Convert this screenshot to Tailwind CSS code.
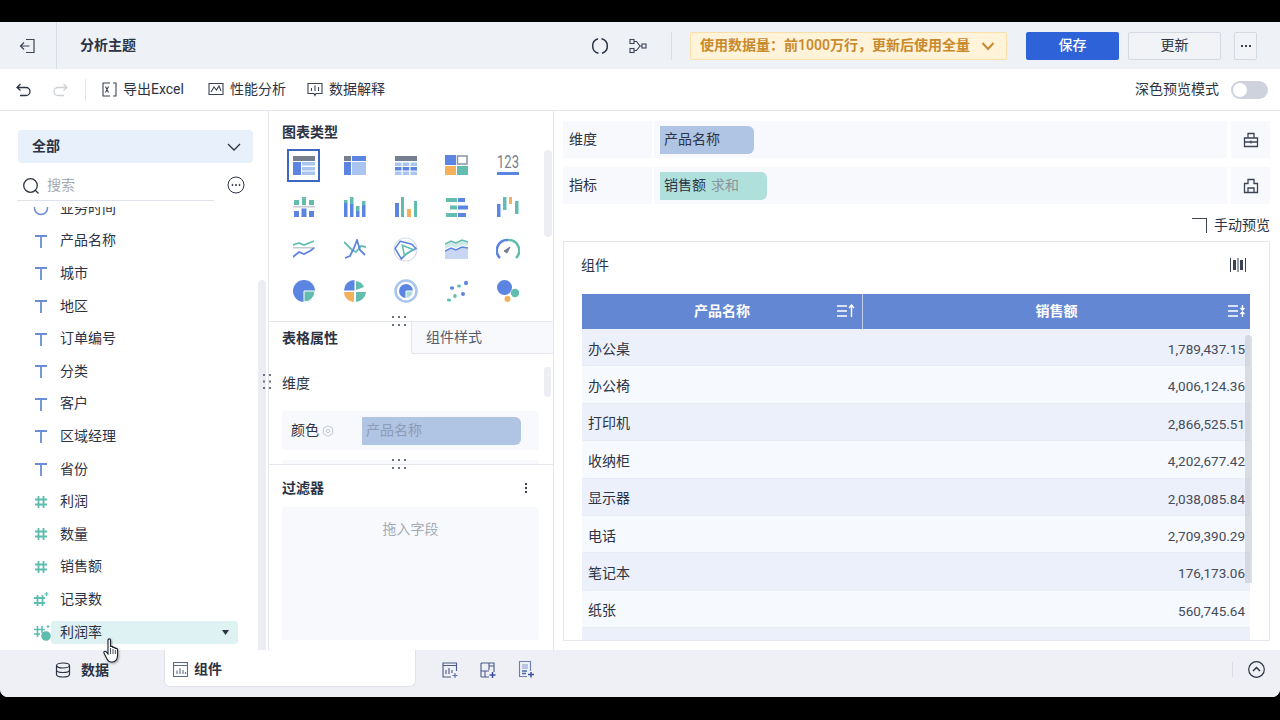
<!DOCTYPE html>
<html lang="zh">
<head>
<meta charset="utf-8">
<script src="https://cdn.jsdelivr.net/npm/@tailwindcss/browser@4"></script>
</head>
<body class="bg-black overflow-hidden">
<div class="w-[1280px] h-[720px] bg-black pt-[22px] font-['Roboto','Noto_Sans_CJK_SC',sans-serif] text-[14px] text-[#2c3344]">
<div class="relative h-[675px] rounded-b-lg overflow-hidden bg-white flex flex-col">

<!-- header -->
<header class="h-[47px] shrink-0 bg-[#eef1f6] flex items-center">
  <div class="w-[57px] h-full border-r border-[#d9dde5] flex items-center justify-center">
    <svg width="18" height="18" viewBox="0 0 18 18" fill="none" stroke="#3c4354" stroke-width="1.2"><path d="M7 2.500h8v13H7M1.500 9h9M5 5.500 1.500 9 5 12.500"/></svg>
  </div>
  <div class="ml-[23px] font-semibold">分析主题</div>
  <div class="ml-auto flex items-center">
    <svg width="18" height="18" viewBox="0 0 18 18" fill="none" stroke="#2c3344" stroke-width="1.500"><path d="M7 1.800A7.500 7.500 0 0 0 7.500 16.300M11 16.200A7.500 7.500 0 0 0 10.500 1.700"/></svg>
    <svg class="ml-[20px]" width="18" height="18" viewBox="0 0 18 18" fill="none" stroke="#3c4354" stroke-width="1.100"><rect x="1" y="2.500" width="4" height="4"/><rect x="1" y="11.500" width="4" height="4"/><rect x="13" y="7" width="4" height="4"/><path d="M5 4.500h2.500L11 9l-3.500 4.500H5M11 9h2"/></svg>
    <div class="ml-[24px] w-px h-[28px] bg-[#d9dde5]"></div>
    <div class="ml-[18px] w-[317px] h-[28px] bg-[#fff3d9] border border-[#fbdfa8] rounded-[2px] flex items-center pl-[9px] text-[#c98a2e] font-semibold whitespace-nowrap">使用数据量：前1000万行，更新后使用全量
      <svg class="ml-[11px]" width="14" height="10" viewBox="0 0 14 10" fill="none" stroke="#c98a2e" stroke-width="2"><path d="M1.500 2 7 8l5.500-6"/></svg>
    </div>
    <button class="ml-[19px] w-[93px] h-[28px] bg-[#2e62d9] text-white rounded-[2px] text-[14px] font-medium">保存</button>
    <button class="ml-[9px] w-[93px] h-[28px] bg-[#f1f3f7] border border-[#d5d9e1] rounded-[2px] text-[14px]">更新</button>
    <button class="ml-[13px] mr-[23px] w-[23px] h-[28px] bg-[#f1f3f7] border border-[#d5d9e1] rounded-[2px] flex items-center justify-center gap-[2px]"><i class="w-[2px] h-[2px] bg-[#3c4354]"></i><i class="w-[2px] h-[2px] bg-[#3c4354]"></i><i class="w-[2px] h-[2px] bg-[#3c4354]"></i></button>
  </div>
</header>

<!-- toolbar -->
<div class="h-[42px] shrink-0 border-b border-[#e4e6eb] flex items-center bg-white">
  <svg class="ml-[16px]" width="16" height="14" viewBox="0 0 16 14" fill="none" stroke="#2c3344" stroke-width="1.300"><path d="M4.500 1 1 4.500 4.500 7.500M1 4.500h9a4 4 0 0 1 0 8H4"/></svg>
  <svg class="ml-[20px]" width="16" height="14" viewBox="0 0 16 14" fill="none" stroke="#ccd0d7" stroke-width="1.300"><path d="M11.500 1 15 4.500 11.500 7.500M15 4.500H6a4 4 0 0 0 0 8h6"/></svg>
  <div class="ml-[17px] w-px h-[22px] bg-[#e4e6eb]"></div>
  <svg class="ml-[16px]" width="15" height="15" viewBox="0 0 15 15" fill="none" stroke="#3c4354" stroke-width="1.100"><path d="M8 1H1v13h7M11 1h3v13h-3M3.500 4.500l3 6M6.500 4.500l-3 6"/></svg>
  <span class="ml-[6px] w-[61px] overflow-hidden whitespace-nowrap">导出Excel</span>
  <svg class="ml-[24px]" width="16" height="15" viewBox="0 0 16 15" fill="none" stroke="#3c4354" stroke-width="1.100"><path d="M1 1.500h14v11H1zM3 10l3-5 2.500 3L11 4l2 5"/></svg>
  <span class="ml-[6px]">性能分析</span>
  <svg class="ml-[21px]" width="16" height="15" viewBox="0 0 16 15" fill="none" stroke="#3c4354" stroke-width="1.100"><path d="M1 1.500h14v10H9l-1 2-1-2H1zM4.500 9V6M8 9V3.500M11.500 9V5"/></svg>
  <span class="ml-[6px]">数据解释</span>
  <span class="ml-auto">深色预览模式</span>
  <div class="ml-[12px] mr-[12px] w-[37px] h-[18px] rounded-full bg-[#cdd2dc] p-[2px]"><div class="w-[14px] h-[14px] rounded-full bg-white"></div></div>
</div>

<!-- main -->
<div class="flex-1 min-h-0 flex">

  <!-- field panel -->
  <aside class="w-[268px] shrink-0 flex flex-col pt-[19px] pl-[18px] overflow-hidden relative">
    <div class="w-[235px] h-[33px] shrink-0 rounded bg-[#e8f0fb] flex items-center justify-between pl-[14px] pr-[12px] font-semibold">全部
      <svg width="14" height="8" viewBox="0 0 14 8" fill="none" stroke="#2c3344" stroke-width="1.300"><path d="M1 1l6 6 6-6"/></svg>
    </div>
    <div class="w-[197px] h-[38px] shrink-0 -ml-px border-b border-[#dfe2e8] flex items-center pl-[5px] pt-[8px] relative">
      <svg width="18" height="18" viewBox="0 0 18 18" fill="none" stroke="#2c3344" stroke-width="1.300"><circle cx="8.500" cy="8.500" r="6.800"/><path d="m13 13 3.500 3.500"/></svg>
      <span class="ml-[7px] text-[#a5abb5]">搜索</span>
    </div>
    <svg class="absolute left-[227px] top-[65px]" width="18" height="18" viewBox="0 0 18 18" fill="none" stroke="#2c3344" stroke-width="1"><circle cx="9" cy="9" r="8"/><circle cx="5.500" cy="9" r=".6" fill="#2c3344"/><circle cx="9" cy="9" r=".6" fill="#2c3344"/><circle cx="12.500" cy="9" r=".6" fill="#2c3344"/></svg>
    <div class="mt-[6px] flex-1 min-h-0 overflow-hidden pl-[15px]">
      <div class="-mt-[15px] flex flex-col">
        <div class="h-[32.600px] flex items-center gap-[11px]"><svg width="16" height="16" viewBox="0 0 16 16" fill="none" stroke="#6b8dd6" stroke-width="1.500"><circle cx="8" cy="8" r="6.500"/></svg><span>业务时间</span></div>
        <div class="h-[32.600px] flex items-center gap-[11px]"><svg width="16" height="16" viewBox="0 0 16 16" fill="none" stroke="#6b8dd6" stroke-width="1.800"><path d="M2 3h12M8 3v12"/></svg><span>产品名称</span></div>
        <div class="h-[32.600px] flex items-center gap-[11px]"><svg width="16" height="16" viewBox="0 0 16 16" fill="none" stroke="#6b8dd6" stroke-width="1.800"><path d="M2 3h12M8 3v12"/></svg><span>城市</span></div>
        <div class="h-[32.600px] flex items-center gap-[11px]"><svg width="16" height="16" viewBox="0 0 16 16" fill="none" stroke="#6b8dd6" stroke-width="1.800"><path d="M2 3h12M8 3v12"/></svg><span>地区</span></div>
        <div class="h-[32.600px] flex items-center gap-[11px]"><svg width="16" height="16" viewBox="0 0 16 16" fill="none" stroke="#6b8dd6" stroke-width="1.800"><path d="M2 3h12M8 3v12"/></svg><span>订单编号</span></div>
        <div class="h-[32.600px] flex items-center gap-[11px]"><svg width="16" height="16" viewBox="0 0 16 16" fill="none" stroke="#6b8dd6" stroke-width="1.800"><path d="M2 3h12M8 3v12"/></svg><span>分类</span></div>
        <div class="h-[32.600px] flex items-center gap-[11px]"><svg width="16" height="16" viewBox="0 0 16 16" fill="none" stroke="#6b8dd6" stroke-width="1.800"><path d="M2 3h12M8 3v12"/></svg><span>客户</span></div>
        <div class="h-[32.600px] flex items-center gap-[11px]"><svg width="16" height="16" viewBox="0 0 16 16" fill="none" stroke="#6b8dd6" stroke-width="1.800"><path d="M2 3h12M8 3v12"/></svg><span>区域经理</span></div>
        <div class="h-[32.600px] flex items-center gap-[11px]"><svg width="16" height="16" viewBox="0 0 16 16" fill="none" stroke="#6b8dd6" stroke-width="1.800"><path d="M2 3h12M8 3v12"/></svg><span>省份</span></div>
        <div class="h-[32.600px] flex items-center gap-[11px]"><svg width="16" height="16" viewBox="0 0 16 16" fill="none" stroke="#5fbcb0" stroke-width="1.800"><path d="M5.500 2v12M10.500 2v12M2 5.500h12M2 10.500h12"/></svg><span>利润</span></div>
        <div class="h-[32.600px] flex items-center gap-[11px]"><svg width="16" height="16" viewBox="0 0 16 16" fill="none" stroke="#5fbcb0" stroke-width="1.800"><path d="M5.500 2v12M10.500 2v12M2 5.500h12M2 10.500h12"/></svg><span>数量</span></div>
        <div class="h-[32.600px] flex items-center gap-[11px]"><svg width="16" height="16" viewBox="0 0 16 16" fill="none" stroke="#5fbcb0" stroke-width="1.800"><path d="M5.500 2v12M10.500 2v12M2 5.500h12M2 10.500h12"/></svg><span>销售额</span></div>
        <div class="h-[32.600px] flex items-center gap-[11px]"><svg width="16" height="16" viewBox="0 0 16 16" fill="none" stroke="#5fbcb0" stroke-width="1.800"><path d="M4.500 4v11M9.500 4v11M1 7h11M1 12h11"/><path d="M13.500 1v4M11.500 3h4" stroke-width="1.200"/></svg><span>记录数</span></div>
        <div class="h-[32.600px] flex items-center relative"><svg class="relative z-10" width="18" height="18" viewBox="0 0 18 18" fill="none" stroke="#5fbcb0" stroke-width="1.600"><path d="M4.500 3v11M9 3v7M1 6.500h11M1 11h6"/><circle cx="13" cy="13" r="4" fill="#5fbcb0"/><path d="M15 2v3M13.500 3.500h3" stroke-width="1.100"/></svg><div class="w-[187px] h-[23px] rounded-[3px] bg-[#dff2f3] flex items-center justify-between pl-[9px] pr-[9px]"><span>利润率</span><svg width="7" height="5" viewBox="0 0 7 5" fill="#2c3344"><path d="M0 0h7L3.500 5z"/></svg></div></div>
      </div>
    </div>
    <div class="absolute left-[258px] top-[169px] bottom-0 w-[8px] rounded-t bg-[#ecedf3]"></div>
  </aside>

  <!-- config panel -->
  <section class="w-[286px] shrink-0 border-x border-[#e4e6eb] flex flex-col relative z-10 bg-white">
    <svg class="absolute -left-[6px] top-[262px]" width="8" height="17" viewBox="0 0 8 17" fill="#6b7280"><rect x="0" y="1" width="2" height="2"/><rect x="6" y="1" width="2" height="2"/><rect x="0" y="7.500" width="2" height="2"/><rect x="6" y="7.500" width="2" height="2"/><rect x="0" y="14" width="2" height="2"/><rect x="6" y="14" width="2" height="2"/></svg>
    <div class="h-[211px] shrink-0 border-b border-[#e4e6eb] relative pt-[12px] pl-[9px]">
      <div class="font-semibold leading-[18px] ml-[4px]">图表类型</div>
      <div class="grid grid-cols-[repeat(5,51px)] auto-rows-[42px] mt-[3px]">
        <div class="flex items-center justify-center"><div class="w-[33px] h-[33px] border-2 border-[#3e67c4] flex items-center justify-center"><svg width="22" height="19" viewBox="0 0 22 19"><rect width="22" height="5" fill="#767f8f"/><rect y="6" width="8" height="13" fill="#5b85e0"/><rect x="9" y="6" width="13" height="3.500" fill="#a9c5ef"/><rect x="9" y="11" width="13" height="3.500" fill="#a9c5ef"/><rect x="9" y="15.500" width="13" height="3.500" fill="#a9c5ef"/></svg></div></div>
        <div class="flex items-center justify-center"><svg width="22" height="19" viewBox="0 0 22 19"><rect width="7" height="5" fill="#767f8f"/><rect x="8" width="14" height="5" fill="#5b85e0"/><rect y="6" width="7" height="13" fill="#5b85e0"/><rect x="8" y="6" width="14" height="13" fill="#a9c5ef"/></svg></div>
        <div class="flex items-center justify-center"><svg width="22" height="19" viewBox="0 0 22 19"><rect width="22" height="5" fill="#767f8f"/><rect y="6.500" width="6.500" height="3.500" fill="#a9c5ef"/><rect x="7.700" y="6.500" width="6.500" height="3.500" fill="#a9c5ef"/><rect x="15.500" y="6.500" width="6.500" height="3.500" fill="#a9c5ef"/><rect y="11" width="6.500" height="3.500" fill="#5b85e0"/><rect x="7.700" y="11" width="6.500" height="3.500" fill="#5b85e0"/><rect x="15.500" y="11" width="6.500" height="3.500" fill="#5b85e0"/><rect y="15.500" width="6.500" height="3.500" fill="#a9c5ef"/><rect x="7.700" y="15.500" width="6.500" height="3.500" fill="#a9c5ef"/><rect x="15.500" y="15.500" width="6.500" height="3.500" fill="#a9c5ef"/></svg></div>
        <div class="flex items-center justify-center"><svg width="23" height="20" viewBox="0 0 23 20"><rect width="11" height="10" fill="#5b85e0"/><rect x="12.500" y="1" width="9.500" height="8" fill="#fff" stroke="#8a93a3" stroke-width="1.500"/><rect y="11" width="11" height="9" fill="#f2b15a"/><rect x="12" y="11" width="11" height="9" fill="#62bdb0"/></svg></div>
        <div class="flex items-center justify-center"><svg width="24" height="32" viewBox="0 -4 24 32"><rect x="1" y="19" width="22" height="3" fill="#5b85e0"/><text x="1" y="15" textLength="22" lengthAdjust="spacingAndGlyphs" font-size="18" fill="#767f8f" font-family="Roboto">123</text></svg></div>

        <div class="flex items-center justify-center"><svg width="22" height="20" viewBox="0 0 22 20"><rect x="9" y="0" width="4" height="8" fill="#62bdb0"/><rect x="1" y="3" width="5" height="5" fill="#62bdb0"/><rect x="16" y="3" width="5" height="5" fill="#62bdb0"/><rect y="9" width="22" height="1.500" fill="#c5cad3"/><rect x="1" y="14" width="5" height="6" fill="#5b85e0"/><rect x="8.500" y="11.500" width="5" height="8.500" fill="#5b85e0"/><rect x="16" y="14" width="5" height="6" fill="#5b85e0"/></svg></div>
        <div class="flex items-center justify-center"><svg width="22" height="20" viewBox="0 0 22 20"><rect x="0" y="6" width="3.500" height="14" fill="#5b85e0"/><rect x="0" y="3" width="3.500" height="3" fill="#62bdb0"/><rect x="6" y="7" width="3.500" height="13" fill="#5b85e0"/><rect x="6" y="0" width="3.500" height="7" fill="#62bdb0"/><rect x="12" y="14" width="3.500" height="6" fill="#5b85e0"/><rect x="12" y="9" width="3.500" height="5" fill="#62bdb0"/><rect x="18" y="8" width="3.500" height="12" fill="#5b85e0"/><rect x="18" y="4" width="3.500" height="4" fill="#62bdb0"/></svg></div>
        <div class="flex items-center justify-center"><svg width="22" height="20" viewBox="0 0 22 20"><rect x="0" y="6" width="4" height="14" fill="#5b85e0"/><rect x="6" y="0" width="3" height="20" fill="#62bdb0"/><rect x="12" y="12" width="4" height="8" fill="#f2b15a"/><rect x="19" y="4" width="3" height="16" fill="#62bdb0"/></svg></div>
        <div class="flex items-center justify-center"><svg width="22" height="19" viewBox="0 0 22 19"><rect width="11" height="4" fill="#62bdb0"/><rect x="12" width="7" height="4" fill="#5b85e0"/><rect x="4" y="7.500" width="7" height="4" fill="#62bdb0"/><rect x="12" y="7.500" width="10" height="4" fill="#5b85e0"/><rect y="15" width="11" height="4" fill="#62bdb0"/><rect x="12" y="15" width="8" height="4" fill="#5b85e0"/></svg></div>
        <div class="flex items-center justify-center"><svg width="22" height="20" viewBox="0 0 22 20"><rect x="0" y="7" width="3.500" height="13" fill="#5b85e0"/><rect x="6" y="0" width="3.500" height="13" fill="#62bdb0"/><rect x="12" y="0" width="3" height="7" fill="#f2b15a"/><rect x="18" y="4" width="3.500" height="13" fill="#62bdb0"/></svg></div>

        <div class="flex items-center justify-center"><svg width="22" height="20" viewBox="0 0 22 20" fill="none" stroke-width="1.800"><path d="M0 6l6-2 5 2 5-2 5-2" stroke="#62bdb0"/><rect y="8" width="22" height="1.500" fill="#c5cad3" stroke="none"/><path d="M0 18l6-5 5 2 6-3 4-3" stroke="#5b85e0"/></svg></div>
        <div class="flex items-center justify-center"><svg width="22" height="20" viewBox="0 0 22 20" fill="none" stroke-width="1.800"><path d="M0 3l8 8 4 2 5-6 5 1" stroke="#62bdb0"/><path d="M1 19l5-2 4-8 3-8 3 10 5 5" stroke="#5b85e0"/></svg></div>
        <div class="flex items-center justify-center"><svg width="25" height="25" viewBox="0 0 24 24" fill="none"><circle cx="12" cy="12" r="11" stroke="#d3dae6"/><path d="M7 4l11 3 4 4-9 5-5 5-6-10z" stroke="#5b85e0" stroke-width="1.500"/><path d="M9 8l10 4-8 6z" stroke="#62bdb0" stroke-width="1.500"/></svg></div>
        <div class="flex items-center justify-center"><svg width="23" height="20" viewBox="0 0 23 20"><path d="M0 12l6-3 5 2 6-3 6 1v11H0z" fill="#c9d6f2"/><path d="M0 12l6-3 5 2 6-3 6 1" fill="none" stroke="#5b85e0" stroke-width="1.500"/><path d="M0 5l6-3 5 2 6-3 6 2v4l-6-1-6 3-5-2-6 3z" fill="#cfeae6"/><path d="M0 5l6-3 5 2 6-3 6 2" fill="none" stroke="#62bdb0" stroke-width="1.500"/></svg></div>
        <div class="flex items-center justify-center"><svg width="24" height="22" viewBox="0 0 24 22" fill="none" stroke-width="2.500"><path d="M4 20A10.500 10.500 0 0 1 12 2" stroke="#5b85e0"/><path d="M12 2A10.500 10.500 0 0 1 20 20" stroke="#62bdb0"/><path d="M8 13l6-4-3 6z" fill="#767f8f" stroke="#767f8f" stroke-width="1"/></svg></div>

        <div class="flex items-center justify-center"><svg width="22" height="22" viewBox="0 0 22 22"><circle cx="11" cy="11" r="11" fill="#5b85e0"/><path d="M11 11h11A11 11 0 0 1 11 22z" fill="#62bdb0" stroke="#fff"/></svg></div>
        <div class="flex items-center justify-center"><svg width="22" height="22" viewBox="0 0 22 22"><path d="M10.500 0v10.500H0A10.500 10.500 0 0 1 10.500 0z" fill="#5b85e0"/><path d="M12 1a10 10 0 0 1 8 6l-8 3z" fill="#62bdb0"/><path d="M0 12h10v10A10 10 0 0 1 0 12z" fill="#f2b15a"/><path d="M12 12h10a11 11 0 0 1-10 10z" fill="#62bdb0"/></svg></div>
        <div class="flex items-center justify-center"><svg width="24" height="24" viewBox="0 0 24 24" fill="none"><circle cx="12" cy="12" r="10.500" stroke="#a9c5ef" stroke-width="2.500"/><circle cx="12" cy="12" r="7" fill="#5b85e0"/><path d="M12 12h7a7 7 0 0 1-7 7z" fill="#a9dbd4" stroke="#fff"/></svg></div>
        <div class="flex items-center justify-center"><svg width="22" height="22" viewBox="0 0 22 22"><ellipse cx="20" cy="3" rx="2" ry="2.200" fill="#5b85e0"/><ellipse cx="13" cy="6" rx="2" ry="1.600" fill="#62bdb0"/><ellipse cx="6" cy="8" rx="2.200" ry="1.800" fill="#5b85e0"/><ellipse cx="17" cy="14" rx="2" ry="2" fill="#5b85e0"/><ellipse cx="9" cy="16" rx="1.800" ry="2" fill="#62bdb0"/><ellipse cx="3" cy="20" rx="2.200" ry="1.600" fill="#62bdb0"/></svg></div>
        <div class="flex items-center justify-center"><svg width="22" height="22" viewBox="0 0 22 22"><circle cx="7.500" cy="7.500" r="7.500" fill="#5b85e0"/><circle cx="18" cy="13" r="4.200" fill="#62bdb0"/><circle cx="10.500" cy="19" r="3" fill="#f2b15a"/></svg></div>
      </div>
      <div class="absolute right-[1px] top-[39px] w-[8px] h-[87px] rounded bg-[#eceef3]"></div>
    </div>

    <div class="h-[32px] shrink-0 flex">
      <div class="w-[142px] pl-[13px] flex items-center font-semibold">表格属性</div>
      <div class="flex-1 bg-[#f7f9fd] border-l border-b border-[#e4e6eb] rounded-bl-[3px] pl-[14px] flex items-center text-[#555c6b]">组件样式</div>
    </div>

    <div class="h-[111px] shrink-0 border-b border-[#e4e6eb] overflow-hidden relative px-[13px]">
      <div class="h-[57px] flex items-center pt-[1px]">维度</div>
      <div class="h-[39px] w-[257px] bg-[#f7f9fd] rounded-[3px] flex items-center pl-[9px]">
        <span>颜色</span>
        <svg class="ml-[3px]" width="12" height="12" viewBox="0 0 12 12" fill="none" stroke="#c5cad3"><path d="M6 .7 10.600 3.300v5.400L6 11.300 1.400 8.700V3.300z"/><circle cx="6" cy="6" r="1.800"/></svg>
        <div class="ml-[28px] w-[159px] h-[28px] bg-[#b0c4e4] rounded-r-[6px] pl-[4px] flex items-center text-[#8d9bb5]">产品名称</div>
      </div>
      <div class="mt-[10px] h-[30px] w-[257px] bg-[#f7f9fd] rounded-[3px]"></div>
      <div class="absolute right-[2px] top-[13px] w-[7px] h-[30px] rounded bg-[#eceef3]"></div>
    </div>

    <div class="flex-1 min-h-0 px-[13px] relative">
      <div class="h-[42px] pt-[4px] flex items-center justify-between font-semibold">过滤器
        <svg class="mr-[12px]" width="4" height="12" viewBox="0 0 4 12" fill="#3c4354"><rect x="1" y="1" width="2" height="2"/><rect x="1" y="5" width="2" height="2"/><rect x="1" y="9" width="2" height="2"/></svg>
      </div>
      <div class="w-[257px] h-[133px] bg-[#f7f9fd] rounded-[3px] pt-[12px] text-center text-[#a5abb5]">拖入字段</div>
    </div>

    <svg class="absolute left-[122px] top-[205px]" width="16" height="10" viewBox="0 0 16 10" fill="#6b7280"><rect x="1" y="0" width="2" height="2"/><rect x="7" y="0" width="2" height="2"/><rect x="13" y="0" width="2" height="2"/><rect x="1" y="8" width="2" height="2"/><rect x="7" y="8" width="2" height="2"/><rect x="13" y="8" width="2" height="2"/></svg>
    <svg class="absolute left-[122px] top-[348px]" width="16" height="10" viewBox="0 0 16 10" fill="#6b7280"><rect x="1" y="0" width="2" height="2"/><rect x="7" y="0" width="2" height="2"/><rect x="13" y="0" width="2" height="2"/><rect x="1" y="8" width="2" height="2"/><rect x="7" y="8" width="2" height="2"/><rect x="13" y="8" width="2" height="2"/></svg>
  </section>

  <!-- preview -->
  <section class="flex-1 min-w-0 flex flex-col pl-[9px] pr-[10px] pt-[10px]">
    <div class="h-[37px] shrink-0 flex gap-[2px]">
      <div class="w-[89px] bg-[#f7f9fd] pl-[6px] flex items-center">维度</div>
      <div class="w-[573px] bg-[#f7f9fd] pl-[6px] flex items-center"><div class="w-[94px] h-[28px] bg-[#b0c4e4] rounded-r-[6px] pl-[4px] flex items-center">产品名称</div></div>
      <div class="ml-[2px] flex-1 bg-[#f7f9fd] flex items-center justify-center"><svg width="16" height="16" viewBox="0 0 16 16" fill="none" stroke="#3c4354" stroke-width="1.300"><path d="M1.500 6h13v8.500h-13zM5 6V1.500h6V6M1.500 10h13M8 8.500v3"/></svg></div>
    </div>
    <div class="h-[37px] mt-[9px] shrink-0 flex gap-[2px]">
      <div class="w-[89px] bg-[#f7f9fd] pl-[6px] flex items-center">指标</div>
      <div class="w-[573px] bg-[#f7f9fd] pl-[6px] flex items-center"><div class="w-[107px] h-[28px] bg-[#b0e0dc] rounded-r-[6px] pl-[4px] flex items-center gap-[5px]">销售额<span class="text-[#8a939c]">求和</span></div></div>
      <div class="ml-[2px] flex-1 bg-[#f7f9fd] flex items-center justify-center"><svg width="16" height="16" viewBox="0 0 16 16" fill="none" stroke="#3c4354" stroke-width="1.300"><path d="M5 1.500h6v4h3.500v9h-13v-9H5zM5 14.500V10h6v4.500"/></svg></div>
    </div>
    <div class="h-[37px] shrink-0 pt-[5px] flex items-center justify-end -mr-[10px] pr-[10px] whitespace-nowrap">
      <div class="w-[15px] h-[15px] border-t border-r border-[#3c4354] mr-[7px]"></div>手动预览
    </div>
    <div class="h-[400px] shrink-0 border border-[#e4e6eb] flex flex-col overflow-hidden relative">
      <div class="h-[52px] shrink-0 pl-[17px] pr-[23px] pb-[6px] flex items-center justify-between">组件
        <svg width="16" height="14" viewBox="0 0 16 14" fill="#3c4354"><rect x="0" y="0" width="1" height="14"/><rect x="3" y="2" width="3" height="10"/><rect x="7.500" y="0" width="1" height="14"/><rect x="10" y="2" width="3" height="10"/><rect x="15" y="0" width="1" height="14"/></svg>
      </div>
      <div class="ml-[18px] w-[668px] flex-1 min-h-0 overflow-hidden">
        <div class="h-[35px] bg-[#6487d3] text-white font-semibold flex">
          <div class="w-[281px] border-r border-white/60 flex items-center justify-center relative">产品名称
            <svg class="absolute right-[7px] top-[10px]" width="18" height="14" viewBox="0 0 18 14" fill="none" stroke="#fff" stroke-width="1.400"><path d="M0 2h10M0 7h10M0 12h10M14.500 13V2M12 4l2.500-3L17 4"/></svg>
          </div>
          <div class="flex-1 flex items-center justify-center relative">销售额
            <svg class="absolute right-[4px] top-[10px]" width="18" height="14" viewBox="0 0 18 14" fill="none" stroke="#fff" stroke-width="1.400"><path d="M0 2h10M0 7h10M0 12h10M14.500 1v4M12.500 4l2 2 2-2M14.500 13V9M12.500 10l2-2 2 2"/></svg>
          </div>
        </div>
        <div class="h-[37.400px] pt-[4px] flex items-center bg-[#ecf0fa] border-b border-[#e9ecf4] pr-[5px]"><span class="pl-[6px] w-[281px]">办公桌</span><span class="ml-auto text-[13.500px] text-[#444b5a]">1,789,437.15</span></div>
        <div class="h-[37.400px] pt-[4px] flex items-center bg-[#f6f9fe] border-b border-[#e9ecf4] pr-[5px]"><span class="pl-[6px] w-[281px]">办公椅</span><span class="ml-auto text-[13.500px] text-[#444b5a]">4,006,124.36</span></div>
        <div class="h-[37.400px] pt-[4px] flex items-center bg-[#ecf0fa] border-b border-[#e9ecf4] pr-[5px]"><span class="pl-[6px] w-[281px]">打印机</span><span class="ml-auto text-[13.500px] text-[#444b5a]">2,866,525.51</span></div>
        <div class="h-[37.400px] pt-[4px] flex items-center bg-[#f6f9fe] border-b border-[#e9ecf4] pr-[5px]"><span class="pl-[6px] w-[281px]">收纳柜</span><span class="ml-auto text-[13.500px] text-[#444b5a]">4,202,677.42</span></div>
        <div class="h-[37.400px] pt-[4px] flex items-center bg-[#ecf0fa] border-b border-[#e9ecf4] pr-[5px]"><span class="pl-[6px] w-[281px]">显示器</span><span class="ml-auto text-[13.500px] text-[#444b5a]">2,038,085.84</span></div>
        <div class="h-[37.400px] pt-[4px] flex items-center bg-[#f6f9fe] border-b border-[#e9ecf4] pr-[5px]"><span class="pl-[6px] w-[281px]">电话</span><span class="ml-auto text-[13.500px] text-[#444b5a]">2,709,390.29</span></div>
        <div class="h-[37.400px] pt-[4px] flex items-center bg-[#ecf0fa] border-b border-[#e9ecf4] pr-[5px]"><span class="pl-[6px] w-[281px]">笔记本</span><span class="ml-auto text-[13.500px] text-[#444b5a]">176,173.06</span></div>
        <div class="h-[37.400px] pt-[4px] flex items-center bg-[#f6f9fe] border-b border-[#e9ecf4] pr-[5px]"><span class="pl-[6px] w-[281px]">纸张</span><span class="ml-auto text-[13.500px] text-[#444b5a]">560,745.64</span></div>
        <div class="h-[37.400px] bg-[#ecf0fa]"></div>
      </div>
      <div class="absolute left-[681px] top-[93px] w-[7px] h-[248px] rounded-t bg-[#c5c8d2]/60"></div>
    </div>
  </section>
</div>

<!-- bottom bar -->
<footer class="h-[47px] shrink-0 bg-[#eef0f5] flex items-start relative z-20">
  <div class="w-[164px] h-[37px] pt-[3px] flex items-center justify-center gap-[10px] font-semibold">
    <svg width="16" height="16" viewBox="0 0 16 16" fill="none" stroke="#2c3344" stroke-width="1.200"><ellipse cx="8" cy="3.500" rx="6.500" ry="2.500"/><path d="M1.500 3.500v9c0 1.400 2.900 2.500 6.500 2.500s6.500-1.100 6.500-2.500v-9M1.500 8c0 1.400 2.900 2.500 6.500 2.500S14.500 9.400 14.500 8"/></svg>
    <span>数据</span>
  </div>
  <div class="w-[252px] h-[37px] pt-[3px] bg-white rounded-b-[6px] border-b border-r border-l border-[#dfe2e8] flex items-center pl-[8px] gap-[6px] font-semibold">
    <svg width="15" height="15" viewBox="0 0 15 15" fill="none" stroke="#5a6b85" stroke-width="1.100"><rect x=".5" y=".5" width="14" height="14"/><path d="M.5 3.500h14M4 12V8.500M7 12V6M10 12V8M12.500 12v-2"/></svg>
    <span>组件</span>
  </div>
  <div class="ml-[26px] h-[37px] pt-[2px] flex items-center gap-[22px]">
    <svg width="16" height="16" viewBox="0 0 16 16" fill="none" stroke="#4a5a85" stroke-width="1.100"><path d="M14.500 9V1H1v14h8M1 3.500h13.500M4 12V8M7 12V6M10 11V8"/><path d="M13 11v5M10.500 13.500h5" stroke="#5a6fb0"/></svg>
    <svg width="16" height="16" viewBox="0 0 16 16" fill="none" stroke="#4a5a85" stroke-width="1.100"><path d="M1 1h13v9M9 15H1zM1 1v14M9 1v7M1 9h8M5 9v6M9 4h5"/><path d="M12.500 10v6M9.500 13h6" stroke="#3d4fa0" stroke-width="1.500"/></svg>
    <svg width="16" height="17" viewBox="0 0 16 17" fill="none" stroke="#6d7fb0" stroke-width="1.100"><path d="M9 15.500H1.500V.5h11V10"/><rect x="4" y="3" width="6" height="5" fill="#b9c6e3" stroke="none"/><path d="M4 10h5M4 12.500h4" stroke="#4a66b5" stroke-width="1.400"/><path d="M13 11v5.500M10 13.500h6" stroke="#3d4fa0" stroke-width="1.500"/></svg>
  </div>
  <div class="ml-auto mr-[15px] h-[37px] pt-[2px] flex items-center gap-[15px]">
    <div class="w-px h-[15px] bg-[#d9dde5]"></div>
    <svg width="17" height="17" viewBox="0 0 17 17" fill="none" stroke="#2c3344" stroke-width="1.200"><circle cx="8.500" cy="8.500" r="7.800"/><path d="M5 10l3.500-3.500L12 10" stroke-width="1.500"/></svg>
  </div>
</footer>

<!-- pointer -->
<svg class="absolute left-[103px] top-[616px] z-30" width="17" height="25" viewBox="0 0 17 25" style="filter:drop-shadow(1px 1px 1px rgba(0,0,0,.35))"><path d="M5 2c0-1.500 2.500-1.500 2.500 0v7c0-1 2.300-1 2.300 0v1c0-1 2.300-1 2.300 0v1c0-1 2.400-.8 2.400 .5V18c0 3-2 6-5 6H8c-2 0-3-1-4-3L1 15c-.6-1.400 1-2.400 2-1.300L5 16z" fill="#fff" stroke="#1d2330" stroke-width="1.100"/><path d="M7.500 10v6M10 11v5M12.300 12v4" stroke="#1d2330" stroke-width=".8"/></svg>

</div>
</div>
</body>
</html>
